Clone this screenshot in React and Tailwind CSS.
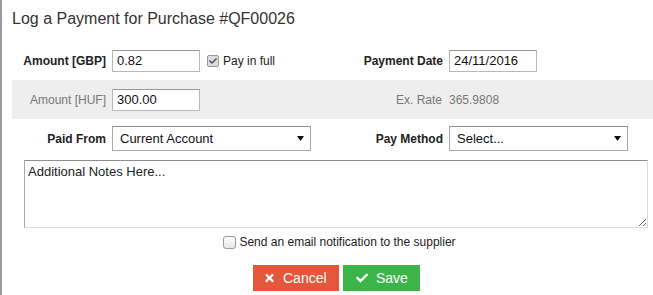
import React from "react";
import { FaTimes, FaCheck } from "react-icons/fa";

function Arrow() {
  return (
    <svg width="7" height="5" viewBox="0 0 7 5" className="shrink-0">
      <path d="M0 0 H7 L3.5 5 Z" fill="#111" />
    </svg>
  );
}

function Select({ value, width }) {
  return (
    <div
      className={`flex h-[25px] items-center justify-between border border-[#a9a9a9] border-t-[#8f8f8f] bg-white pl-[7px] pr-[6px] text-[13px] text-[#111] ${width}`}
    >
      <span>{value}</span>
      <Arrow />
    </div>
  );
}

function Input({ value }) {
  return (
    <div className="flex h-[22px] w-[88px] items-center border border-[#b8b8b8] border-t-[#999] bg-white pl-[4px] text-[13px] text-[#111]">
      {value}
    </div>
  );
}

export default function App() {
  return (
    <div className="h-[295px] w-[653px] overflow-hidden border-l-2 border-[#9a9a9a] bg-white font-['Liberation_Sans',Arial,sans-serif]">
      <div className="w-[659px] pl-[10px]">
        <div className="mt-[9px] h-[20px] text-[16px] leading-[20px] text-[#333]">
          Log a Payment for Purchase #QF00026
        </div>

        <div className="mt-[12px] grid h-[39px] grid-cols-[100px_237px_100px_1fr] items-center text-[12px]">
          <div className="pr-[6px] text-right font-bold text-[#222]">Amount [GBP]</div>
          <div className="flex items-center">
            <Input value="0.82" />
            <div className="ml-[7px] flex h-[12px] w-[12px] items-center justify-center rounded-[2px] border border-[#9a9a9a] bg-[#dcdcdc]">
              <FaCheck className="h-[8px] w-[8px] text-[#555]" />
            </div>
            <span className="ml-[4px] text-[#222]">Pay in full</span>
          </div>
          <div className="pr-[6px] text-right font-bold text-[#222]">Payment Date</div>
          <div>
            <Input value="24/11/2016" />
          </div>
        </div>

        <div className="grid h-[39px] grid-cols-[100px_237px_100px_1fr] items-center bg-[#eeeeee] text-[12px]">
          <div className="pr-[6px] text-right text-[#777]">Amount [HUF]</div>
          <div>
            <Input value="300.00" />
          </div>
          <div className="pr-[7px] text-right text-[#777]">Ex. Rate</div>
          <div className="text-[#777]">365.9808</div>
        </div>

        <div className="grid h-[39px] grid-cols-[100px_237px_100px_1fr] items-center text-[12px]">
          <div className="pr-[6px] text-right font-bold text-[#222]">Paid From</div>
          <div>
            <Select value="Current Account" width="w-[199px]" />
          </div>
          <div className="pr-[6px] text-right font-bold text-[#222]">Pay Method</div>
          <div>
            <Select value="Select..." width="w-[179px]" />
          </div>
        </div>

        <textarea
          defaultValue="Additional Notes Here..."
          className="ml-[12px] mt-[2px] block h-[68px] w-[624px] border border-[#a9a9a9] border-b-[#dcdcdc] border-r-[#dcdcdc] border-t-[#8f8f8f] bg-white px-[3px] pt-[3px] text-[13px] leading-[15px] text-[#222] outline-none"
        />

        <div className="mt-[4px] flex h-[20px] items-center justify-center pl-[6px] text-[12px] text-[#222]">
          <div className="h-[13px] w-[13px] rounded-[3px] border border-[#9a9a9a] bg-gradient-to-b from-white to-[#e6e6e6]" />
          <span className="ml-[3px]">Send an email notification to the supplier</span>
        </div>

        <div className="mt-[13px] flex justify-center gap-[4px]">
          <button className="flex h-[26px] w-[86px] items-center bg-[#e4573a] pl-[11px] text-[14px] text-white">
            <FaTimes className="h-[12px] w-[11px]" />
            <span className="ml-[8px]">Cancel</span>
          </button>
          <button className="flex h-[26px] w-[77px] items-center bg-[#3bb54a] pl-[13px] text-[14px] text-white">
            <FaCheck className="h-[12px] w-[12px]" />
            <span className="ml-[8px]">Save</span>
          </button>
        </div>
      </div>
    </div>
  );
}
